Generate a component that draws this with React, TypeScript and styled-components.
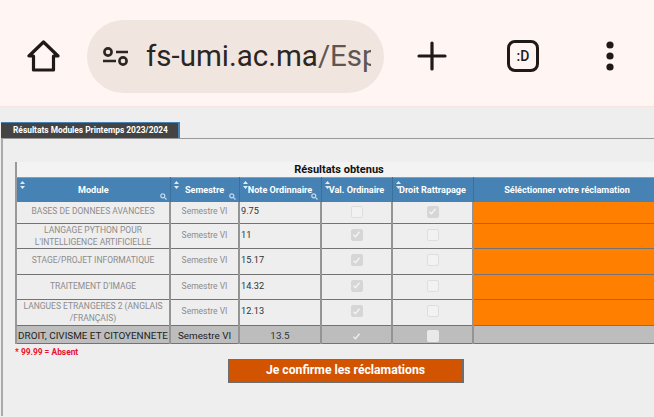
import React from "react";
import styled, { createGlobalStyle } from "styled-components";

const GlobalStyle = createGlobalStyle`
  html, body {
    margin: 0;
    padding: 0;
    width: 654px;
    height: 417px;
    overflow: hidden;
    background: #eeeeee;
    font-family: "Roboto", "Liberation Sans", sans-serif;
  }
`;

const BrowserBar = styled.header`
  height: 107px;
  box-sizing: border-box;
  padding: 20px 0 14px 27px;
  display: flex;
  align-items: center;
  background: #fff5f2;
  border-bottom: 1px solid #f5e6e0;
  color: #1f1a18;
`;

const UrlPill = styled.div`
  width: 297px;
  height: 73px;
  box-sizing: border-box;
  margin-left: 27px;
  padding: 0 13px 0 15px;
  display: flex;
  align-items: center;
  gap: 16px;
  border-radius: 37px;
  background: #f1e5e0;
`;

const UrlText = styled.div`
  width: 225px;
  overflow: hidden;
  white-space: nowrap;
  font-size: 29.5px;
  color: #2c2623;

  span {
    color: #5f5651;
  }
`;

const PlusSlot = styled.div`
  margin-left: 33px;
  display: flex;
`;

const TabCount = styled.div`
  width: 32px;
  height: 32px;
  box-sizing: border-box;
  margin-left: 60px;
  display: flex;
  align-items: center;
  justify-content: center;
  border: 3px solid #1f1a18;
  border-radius: 8px;
  font-size: 14px;
  font-weight: 500;
`;

const KebabSlot = styled.div`
  margin-left: 67px;
  display: flex;
`;

const Page = styled.main`
  padding: 15px 0 0 1px;
`;

const TabLabel = styled.div`
  width: 179px;
  height: 16px;
  box-sizing: border-box;
  padding-left: 12px;
  background: #444444;
  border-right: 2px solid #4682b4;
  border-top: 1px solid #4682b4;
  color: #ffffff;
  font-size: 8.4px;
  font-weight: 700;
  line-height: 14px;
  white-space: nowrap;
`;

const Panel = styled.section`
  height: 278px;
  box-sizing: border-box;
  padding: 23px 0 0 12px;
  border-top: 1px solid #9a9a9a;
  border-left: 2px solid #aaaaaa;
`;

const Table = styled.table`
  width: 647px;
  table-layout: fixed;
  border-collapse: collapse;
  border-left: 2px solid #999999;
`;

const TitleCell = styled.th`
  height: 15px;
  padding: 0;
  background: #f3f3f3;
  color: #111111;
  font-size: 11px;
  font-weight: 700;
  line-height: 15px;
`;

const HeadCell = styled.th`
  position: relative;
  height: 24px;
  padding: 0;
  background: #4682b4;
  border-right: 1px solid #3c6f9a;
  border-top: 1px solid #9a9a9a;
  color: #ffffff;
  font-size: 9.1px;
  font-weight: 700;
  white-space: nowrap;
`;

const SortMark = styled.svg`
  position: absolute;
  top: 3px;
  left: 3px;
`;

const SearchMark = styled.svg`
  position: absolute;
  right: 3px;
  bottom: 2px;
`;

const BodyRow = styled.tr<{ $h: number; $final?: boolean }>`
  height: ${(p) => p.$h}px;
  background: ${(p) => (p.$final ? "#bdbdbd" : "#eeeeee")};
  color: ${(p) => (p.$final ? "#222222" : "#8c8c8c")};
  font-size: ${(p) => (p.$final ? "9.9px" : "8.5px")};
`;

const Cell = styled.td<{ $orange?: boolean; $align?: string; $pad?: string }>`
  padding: ${(p) => p.$pad ?? "0 1px 2px"};
  box-sizing: border-box;
  text-align: ${(p) => p.$align ?? "center"};
  line-height: 12px;
  border-right: 2px solid #949494;
  border-bottom: 1px solid #737373;
  background: ${(p) => (p.$orange ? "#ff8000" : "transparent")};
  white-space: nowrap;
`;

const NoteCell = styled(Cell)<{ $dark?: boolean }>`
  color: #333333;
  font-size: ${(p) => (p.$dark ? "9.9px" : "9.2px")};
`;

const Box = styled.span<{ $on: boolean; $final?: boolean }>`
  width: 12px;
  height: 12px;
  display: inline-flex;
  align-items: center;
  justify-content: center;
  vertical-align: middle;
  border-radius: 2px;
  box-sizing: border-box;
  background: ${(p) =>
    p.$final ? (p.$on ? "transparent" : "#e9e9e9") : p.$on ? "#d6d6d6" : "#f2f2f2"};
  border: 1px solid
    ${(p) => (p.$final ? "transparent" : p.$on ? "#d6d6d6" : "#dedede")};
`;

const Absent = styled.p`
  margin: 3px 0 0;
  color: #e8112d;
  font-size: 8.4px;
  font-weight: 700;
  line-height: 10px;
`;

const ConfirmButton = styled.button`
  display: block;
  width: 236px;
  height: 24px;
  margin: 2px 0 0 213px;
  padding: 0;
  background: #d35400;
  border: 1px solid #6e6e6e;
  border-right-width: 2px;
  border-bottom-width: 2px;
  color: #ffffff;
  font-family: inherit;
  font-size: 12.2px;
  font-weight: 700;
`;

const rows = [
  { name: ["BASES DE DONNEES AVANCEES"], note: "9.75", val: false, droit: true, h: 21 },
  { name: ["LANGAGE PYTHON POUR", "L'INTELLIGENCE ARTIFICIELLE"], note: "11", val: true, droit: false, h: 25 },
  { name: ["STAGE/PROJET INFORMATIQUE"], note: "15.17", val: true, droit: false, h: 26 },
  { name: ["TRAITEMENT D'IMAGE"], note: "14.32", val: true, droit: false, h: 25 },
  { name: ["LANGUES ETRANGERES 2 (ANGLAIS", "/FRANÇAIS)"], note: "12.13", val: true, droit: false, h: 26 },
];

const FINAL_PAD = "4px 1px 0";

const Sort = () => (
  <SortMark width="5" height="8" viewBox="0 0 5 8" fill="#dfeaf4">
    <path d="M2.5 0 5 3H0zM2.5 8 0 5h5z" />
  </SortMark>
);

const Search = () => (
  <SearchMark width="7" height="7" viewBox="0 0 7 7" fill="none" stroke="#c4d8ea" strokeWidth="1.2">
    <circle cx="2.8" cy="2.8" r="2" />
    <path d="m4.3 4.3 2.2 2.2" />
  </SearchMark>
);

const Check = ({ color }: { color: string }) => (
  <svg width="9" height="9" viewBox="0 0 9 9" fill="none" stroke={color} strokeWidth="1.4">
    <path d="m1.5 4.8 2 2 4-5" />
  </svg>
);

const CheckBox = ({ on, final }: { on: boolean; final?: boolean }) => (
  <Box $on={on} $final={final}>
    {on && <Check color={final ? "#eeeeee" : "#f4f4f4"} />}
  </Box>
);

const App: React.FC = () => {
  return (
    <>
      <GlobalStyle />
      <BrowserBar>
        <svg width="33" height="32" viewBox="0 0 33 32" fill="none" stroke="#1f1a18" strokeWidth="3.2" strokeLinejoin="round">
          <path d="M16.5 2 2 16h4.5v14h20V16H31z" />
        </svg>
        <UrlPill>
          <svg width="28" height="19" viewBox="0 0 28 19" fill="none" stroke="#2c2623" strokeWidth="2.6" style={{ flexShrink: 0 }}>
            <circle cx="6" cy="5" r="3.6" />
            <path d="M14 5h12M1 14h13" />
            <circle cx="21" cy="14" r="3.6" />
          </svg>
          <UrlText>
            fs-umi.ac.ma<span>/Esp</span>
          </UrlText>
        </UrlPill>
        <PlusSlot>
          <svg width="30" height="30" viewBox="0 0 30 30" stroke="#1f1a18" strokeWidth="3.2" strokeLinecap="round">
            <path d="M15 2v26M2 15h26" />
          </svg>
        </PlusSlot>
        <TabCount>:D</TabCount>
        <KebabSlot>
          <svg width="8" height="30" viewBox="0 0 8 30" fill="#1f1a18">
            <circle cx="4" cy="4" r="3.6" />
            <circle cx="4" cy="15" r="3.6" />
            <circle cx="4" cy="26" r="3.6" />
          </svg>
        </KebabSlot>
      </BrowserBar>
      <Page>
        <TabLabel>Résultats Modules Printemps 2023/2024</TabLabel>
        <Panel>
          <Table>
            <colgroup>
              <col width="154" />
              <col width="69" />
              <col width="82" />
              <col width="71" />
              <col width="81" />
              <col />
            </colgroup>
            <thead>
              <tr>
                <TitleCell colSpan={6}>Résultats obtenus</TitleCell>
              </tr>
              <tr>
                <HeadCell>Module<Sort /><Search /></HeadCell>
                <HeadCell>Semestre<Sort /><Search /></HeadCell>
                <HeadCell>Note Ordinnaire<Sort /><Search /></HeadCell>
                <HeadCell>Val. Ordinaire<Sort /></HeadCell>
                <HeadCell>Droit Rattrapage<Sort /></HeadCell>
                <HeadCell>Séléctionner votre réclamation</HeadCell>
              </tr>
            </thead>
            <tbody>
              {rows.map((r) => (
                <BodyRow key={r.name[0]} $h={r.h}>
                  <Cell $pad={r.name.length > 1 ? "0 1px" : undefined}>
                    {r.name.map((line) => (
                      <div key={line}>{line}</div>
                    ))}
                  </Cell>
                  <Cell>Semestre VI</Cell>
                  <NoteCell $align="left">{r.note}</NoteCell>
                  <Cell><CheckBox on={r.val} /></Cell>
                  <Cell><CheckBox on={r.droit} /></Cell>
                  <Cell $orange />
                </BodyRow>
              ))}
              <BodyRow $h={18} $final>
                <Cell $pad={FINAL_PAD}>DROIT, CIVISME ET CITOYENNETE</Cell>
                <Cell $pad={FINAL_PAD}>Semestre VI</Cell>
                <NoteCell $pad={FINAL_PAD} $dark>13.5</NoteCell>
                <Cell $pad={FINAL_PAD}><CheckBox on final /></Cell>
                <Cell $pad={FINAL_PAD}><CheckBox on={false} final /></Cell>
                <Cell />
              </BodyRow>
            </tbody>
          </Table>
          <Absent>* 99.99 = Absent</Absent>
          <ConfirmButton>Je confirme les réclamations</ConfirmButton>
        </Panel>
      </Page>
    </>
  );
};

export default App;
